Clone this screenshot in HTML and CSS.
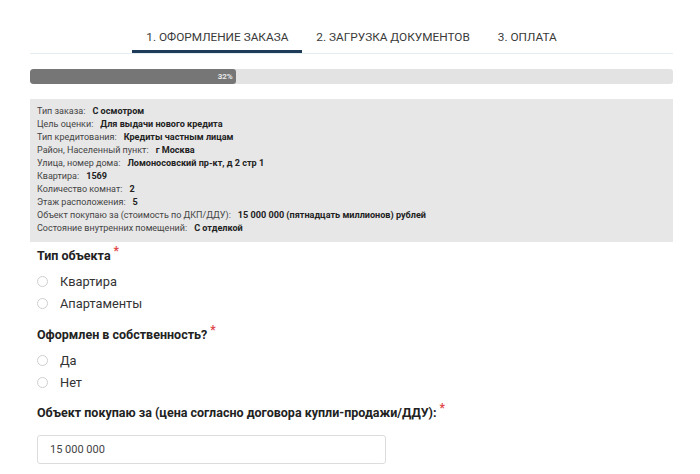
FILE: index.html
```html
<!DOCTYPE html>
<html lang="ru">
<head>
<meta charset="utf-8">
<link rel="stylesheet" href="styles.css">
</head>
<body>
<div class="page">
  <nav class="tabs">
    <div class="tab active">1. ОФОРМЛЕНИЕ ЗАКАЗА</div>
    <div class="tab">2. ЗАГРУЗКА ДОКУМЕНТОВ</div>
    <div class="tab">3. ОПЛАТА</div>
  </nav>
  <div class="progress">
    <div class="progress-fill" style="width:32%"><span>32%</span></div>
  </div>
  <div class="summary">
    <div class="row"><span class="lbl">Тип заказа:</span><b>С осмотром</b></div>
    <div class="row"><span class="lbl">Цель оценки:</span><b>Для выдачи нового кредита</b></div>
    <div class="row"><span class="lbl">Тип кредитования:</span><b>Кредиты частным лицам</b></div>
    <div class="row"><span class="lbl">Район, Населенный пункт:</span><b>г Москва</b></div>
    <div class="row"><span class="lbl">Улица, номер дома:</span><b>Ломоносовский пр-кт, д 2 стр 1</b></div>
    <div class="row"><span class="lbl">Квартира:</span><b>1569</b></div>
    <div class="row"><span class="lbl">Количество комнат:</span><b>2</b></div>
    <div class="row"><span class="lbl">Этаж расположения:</span><b>5</b></div>
    <div class="row"><span class="lbl">Объект покупаю за (стоимость по ДКП/ДДУ):</span><b>15 000 000 (пятнадцать миллионов) рублей</b></div>
    <div class="row"><span class="lbl">Состояние внутренних помещений:</span><b>С отделкой</b></div>
  </div>
  <div class="form">
    <div class="q q1">Тип объекта<span class="req">*</span></div>
    <div class="radios r1">
      <label class="radio"><span class="circle"></span>Квартира</label>
      <label class="radio"><span class="circle"></span>Апартаменты</label>
    </div>
    <div class="q q2">Оформлен в собственность?<span class="req">*</span></div>
    <div class="radios r2">
      <label class="radio"><span class="circle"></span>Да</label>
      <label class="radio"><span class="circle"></span>Нет</label>
    </div>
    <div class="q q3">Объект покупаю за (цена согласно договора купли-продажи/ДДУ):<span class="req">*</span></div>
    <div class="input">15 000 000</div>
  </div>
</div>
</body>
</html>
```

FILE: styles.css
```css
* { box-sizing: border-box; }
body {
  margin: 0;
  background: #fff;
  font-family: Roboto, "Liberation Sans", Arial, sans-serif;
  color: #333;
}
.page {
  width: 643px;
  margin-left: 30px;
}
.tabs {
  display: flex;
  justify-content: center;
  border-bottom: 1px solid #e4edf1;
}
.tab {
  padding: 30px 14px 6px;
  font-size: 11.8px;
  line-height: 14px;
  color: #3a3a3a;
  border-bottom: 3px solid transparent;
}
.tab.active {
  border-bottom-color: #1f3b5a;
}
.progress {
  margin-top: 15px;
  height: 15px;
  background: #e3e3e3;
  border-radius: 3px;
  overflow: hidden;
}
.progress-fill {
  height: 100%;
  background: #767676;
  border-radius: 3px;
  display: flex;
  justify-content: flex-end;
  align-items: center;
  padding-right: 3px;
}
.progress-fill span {
  font-size: 8px;
  font-weight: 700;
  color: #e8e8e8;
}
.summary {
  margin-top: 15px;
  background: #e7e7e7;
  padding: 6px 7px 7px;
  font-size: 9px;
  line-height: 13px;
  color: #444;
}
.row .lbl { margin-right: 7px; }
.row b { color: #222; font-weight: 700; font-size: 9.1px; }
.form {
  padding-left: 7px;
}
.q {
  font-size: 12.5px;
  line-height: 16px;
  font-weight: 700;
  color: #222;
}
.q1 { margin-top: 6px; }
.q2 { margin-top: 13px; }
.q3 { margin-top: 12px; }
.req {
  color: #e04545;
  font-size: 12px;
  position: relative;
  top: -5px;
  margin-left: 3px;
}
.radios { display: flex; flex-direction: column; }
.r1 { margin-top: 6px; }
.r2 { margin-top: 6px; }
.radio {
  display: flex;
  align-items: center;
  height: 22px;
  font-size: 12.8px;
  color: #333;
}
.circle {
  width: 11px;
  height: 11px;
  border: 1px solid #cfcfcf;
  border-radius: 50%;
  margin-right: 12px;
}
.input {
  margin-top: 14px;
  width: 349px;
  height: 29px;
  border: 1px solid #dcdcdc;
  border-radius: 3px;
  padding: 0 12px;
  display: flex;
  align-items: center;
  font-size: 11px;
  color: #444;
}
```
